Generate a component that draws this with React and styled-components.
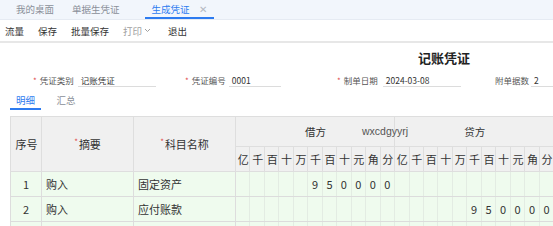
import React from "react";
import styled, { createGlobalStyle } from "styled-components";

const Global = createGlobalStyle`
  html, body { margin: 0; padding: 0; background: #fff; }
  body {
    width: 553px; height: 226px; overflow: hidden;
    font-family: "Noto Sans CJK SC", "Noto Sans", sans-serif;
    color: #333;
  }
`;

const Page = styled.div`
  position: relative;
  width: 553px;
  height: 226px;
  overflow: hidden;
`;

const TabBar = styled.div`
  height: 20px;
  background: #f2f6fc;
  border-bottom: 1px solid #e6ebf3;
  display: flex;
  align-items: stretch;
  padding-left: 8px;
  box-sizing: border-box;
`;

const Tab = styled.div`
  display: flex;
  align-items: center;
  gap: 9px;
  padding: 0 ${p => (p.$active ? "7px" : "8px")};
  margin-right: ${p => p.$gap || 0}px;
  font-size: 9.5px;
  color: ${p => (p.$active ? "#2d7bf0" : "#8a8f99")};
  border-bottom: 2px solid ${p => (p.$active ? "#2d7bf0" : "transparent")};
`;

const Close = styled.span`
  color: #b4b9c2;
  font-size: 10px;
`;

const Toolbar = styled.div`
  height: 21px;
  display: flex;
  align-items: center;
  padding-left: 5px;
  gap: 14px;
  border-bottom: 2px solid #e7e7e7;
`;

const ToolBtn = styled.span`
  font-size: 9.5px;
  color: ${p => (p.$disabled ? "#a0a0a0" : "#333")};
  display: inline-flex;
  align-items: center;
  gap: 2px;
  margin-left: ${p => p.$ml || 0}px;
`;

const Title = styled.div`
  margin: 6px 0 0 418px;
  font-size: 13px;
  font-weight: 700;
  color: #222;
  height: 18px;
  line-height: 18px;
`;

const FormRow = styled.div`
  display: flex;
  align-items: flex-end;
  height: 15px;
  margin-top: 5px;
`;

const Field = styled.div`
  display: flex;
  align-items: flex-end;
  width: ${p => p.$w}px;
  padding-left: ${p => p.$pl}px;
  box-sizing: border-box;
  flex-shrink: 0;
`;

const Label = styled.span`
  font-size: 8.5px;
  color: #555;
  line-height: 12px;
  white-space: nowrap;
  &::before {
    content: ${p => (p.$req ? '"*"' : '""')};
    color: #e04a4a;
    margin-right: 3px;
    font-size: 8px;
  }
`;

const Value = styled.span`
  margin-left: ${p => p.$ml || 4}px;
  width: ${p => p.$w}px;
  border-bottom: 1px solid #dcdcdc;
  font-size: 8.5px;
  line-height: 12px;
  padding-left: 3px;
  color: #333;
  box-sizing: border-box;
  white-space: nowrap;
`;

const SubTabs = styled.div`
  display: flex;
  margin: 6px 0 0 10px;
  height: 17px;
`;

const SubTab = styled.div`
  width: ${p => p.$w}px;
  font-size: 9.5px;
  text-align: center;
  line-height: 15px;
  color: ${p => (p.$active ? "#2d7bf0" : "#8a8f99")};
  border-bottom: 2px solid ${p => (p.$active ? "#2d7bf0" : "transparent")};
`;

const TableWrap = styled.div`
  position: relative;
  margin: 6px 0 0 10px;
`;

const Table = styled.table`
  border-collapse: collapse;
  table-layout: fixed;
  width: 543px;
  font-size: 11px;
  color: #333;
`;

const Th = styled.th`
  background: #f0f0f0;
  border: 1px solid #dedede;
  font-weight: 400;
  height: ${p => p.$h || 26}px;
  padding: 0;
  text-align: center;
  font-size: ${p => p.$fs || 11}px;
  color: #333;
  overflow: hidden;
  white-space: nowrap;
  &::before {
    content: ${p => (p.$req ? '"*"' : '""')};
    color: #e04a4a;
    font-size: 8px;
    vertical-align: top;
    margin-right: 1px;
  }
`;

const Tr = styled.tr`
  background: #effbee;
  height: 25px;
`;

const Td = styled.td`
  border: 1px solid ${p => (p.$digit ? "#e3ece3" : "#dddddd")};
  border-bottom: 1px solid #dcdcdc;
  padding: 0 ${p => (p.$pad ? 4 : 0)}px;
  text-align: ${p => p.$align || "left"};
  font-size: 11px;
  white-space: nowrap;
  overflow: hidden;
`;

const Overlay = styled.span`
  position: absolute;
  left: 352px;
  top: 9px;
  font-size: 10.5px;
  color: #555;
  font-family: "Liberation Sans", Arial, sans-serif;
`;

const DIGITS = ["亿", "千", "百", "十", "万", "千", "百", "十", "元", "角", "分"];
const COLW = 318 / 22;

function digitsOf(amount) {
  if (amount == null) return Array(11).fill("");
  const s = String(amount);
  const pad = Array(11 - s.length).fill("");
  return pad.concat(s.split(""));
}

const rows = [
  { no: 1, summary: "购入", account: "固定资产", debit: 950000, credit: null },
  { no: 2, summary: "购入", account: "应付账款", debit: null, credit: 950000 },
  { no: "", summary: "", account: "", debit: null, credit: null },
];

export default function App() {
  return (
    <Page>
      <Global />
      <TabBar>
        <Tab $gap={2}>我的桌面</Tab>
        <Tab $gap={17}>单据生凭证</Tab>
        <Tab $active>
          生成凭证<Close>✕</Close>
        </Tab>
      </TabBar>
      <Toolbar>
        <ToolBtn>流量</ToolBtn>
        <ToolBtn>保存</ToolBtn>
        <ToolBtn>批量保存</ToolBtn>
        <ToolBtn $disabled>
          打印
          <svg width="7" height="5" viewBox="0 0 7 5">
            <path d="M1 1l2.5 2.5L6 1" fill="none" stroke="#a0a0a0" strokeWidth="1" />
          </svg>
        </ToolBtn>
        <ToolBtn $ml={3}>退出</ToolBtn>
      </Toolbar>
      <Title>记账凭证</Title>
      <FormRow>
        <Field $w={178} $pl={33}>
          <Label $req>凭证类别</Label>
          <Value $w={78}>记账凭证</Value>
        </Field>
        <Field $w={154} $pl={7}>
          <Label $req>凭证编号</Label>
          <Value $w={52} $ml={3}>0001</Value>
        </Field>
        <Field $w={154} $pl={5}>
          <Label $req>制单日期</Label>
          <Value $w={78} $ml={5}>2024-03-08</Value>
        </Field>
        <Field $w={70} $pl={6}>
          <Label>附单据数</Label>
          <Value $w={30} $ml={2}>2</Value>
        </Field>
      </FormRow>
      <SubTabs>
        <SubTab $w={31} $active>明细</SubTab>
        <SubTab $w={50}>汇总</SubTab>
      </SubTabs>
      <TableWrap>
        <Table>
          <colgroup>
            <col style={{ width: 31 }} />
            <col style={{ width: 92 }} />
            <col style={{ width: 102 }} />
            {Array.from({ length: 22 }).map((_, i) => (
              <col key={i} style={{ width: COLW }} />
            ))}
          </colgroup>
          <thead>
            <tr>
              <Th rowSpan={2}>序号</Th>
              <Th rowSpan={2} $req>摘要</Th>
              <Th rowSpan={2} $req>科目名称</Th>
              <Th colSpan={11} $h={29} $fs={10.5}>借方</Th>
              <Th colSpan={11} $h={29} $fs={10.5}>贷方</Th>
            </tr>
            <tr>
              {DIGITS.concat(DIGITS).map((d, i) => (
                <Th key={i} $h={24}>{d}</Th>
              ))}
            </tr>
          </thead>
          <tbody>
            {rows.map((r, i) => (
              <Tr key={i}>
                <Td $align="center">{r.no}</Td>
                <Td $pad>{r.summary}</Td>
                <Td $pad>{r.account}</Td>
                {digitsOf(r.debit).map((d, j) => (
                  <Td key={"d" + j} $digit $align="center">{d}</Td>
                ))}
                {digitsOf(r.credit).map((d, j) => (
                  <Td key={"c" + j} $digit $align="center">{d}</Td>
                ))}
              </Tr>
            ))}
          </tbody>
        </Table>
        <Overlay>wxcdgyyrj</Overlay>
      </TableWrap>
    </Page>
  );
}
